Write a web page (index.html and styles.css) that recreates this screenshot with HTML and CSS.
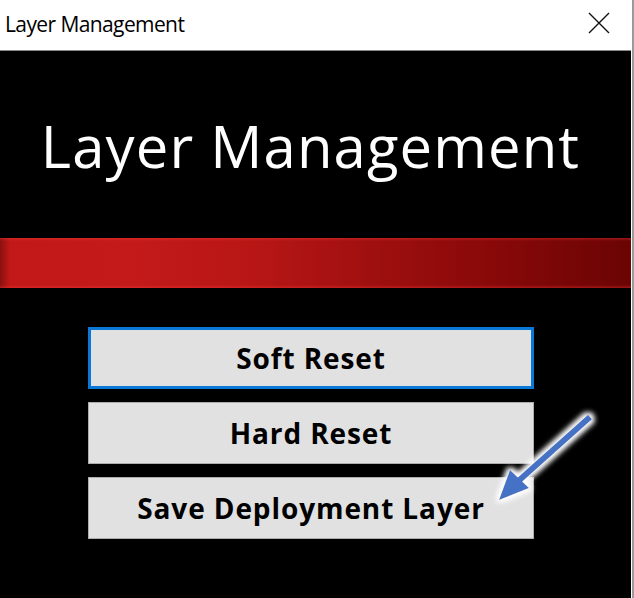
FILE: index.html
```html
<!DOCTYPE html>
<html>
<head>
<meta charset="utf-8">
<link rel="stylesheet" href="styles.css">
</head>
<body>
<div class="window">
  <div class="titlebar">
    <span class="title">Layer Management</span>
    <svg class="close" width="22" height="22" viewBox="0 0 22 22"><path d="M1 1 L21 21 M21 1 L1 21" stroke="#111" stroke-width="1.4" fill="none"/></svg>
  </div>
  <div class="content">
    <h1 class="heading">Layer Management</h1>
    <div class="band"></div>
    <div class="buttons">
      <button class="btn focused">Soft Reset</button>
      <button class="btn">Hard Reset</button>
      <button class="btn">Save Deployment Layer</button>
    </div>
    <svg class="arrow" width="120" height="110" viewBox="0 0 120 110">
      <defs>
        <filter id="glow" x="-30%" y="-30%" width="160%" height="160%">
          <feMorphology in="SourceAlpha" operator="dilate" radius="2.5" result="d"/>
          <feGaussianBlur in="d" stdDeviation="2.5" result="b"/>
          <feFlood flood-color="#ffffff"/>
          <feComposite in2="b" operator="in" result="g"/>
          <feMerge><feMergeNode in="g"/><feMergeNode in="SourceGraphic"/></feMerge>
        </filter>
      </defs>
      <g filter="url(#glow)">
        <line x1="106" y1="15" x2="31" y2="82" stroke="#4472c4" stroke-width="6"/>
        <polygon points="15,98 26,68 45,86" fill="#4472c4"/>
      </g>
    </svg>
  </div>
</div>
</body>
</html>
```
FILE: styles.css
```css
html, body {
  margin: 0;
  padding: 0;
  background: #ffffff;
}
.window {
  width: 631px;
  height: 598px;
  border-right: 1px solid #ffffff;
  display: flex;
  flex-direction: column;
  position: relative;
  box-shadow: 2px 0 0 #9a9a9a;
}
.titlebar {
  height: 50px;
  background: #ffffff;
  border-bottom: 1px solid #8a8a8a;
  display: flex;
  align-items: center;
  justify-content: space-between;
  padding: 0 21px 0 5px;
  flex-shrink: 0;
}
.title {
  font-family: "Open Sans", "Noto Sans", sans-serif;
  font-size: 21px;
  color: #000;
  letter-spacing: -0.6px;
  margin-top: -2px;
}
.close {
  display: block;
  margin-top: -4px;
}
.content {
  flex: 1;
  background: #000;
  position: relative;
  display: flex;
  flex-direction: column;
}
.heading {
  margin: 59px 0 0 0;
  padding-right: 10px;
  height: 128px;
  line-height: 72px;
  font-family: "Open Sans", "Noto Sans", sans-serif;
  font-weight: 400;
  font-size: 58px;
  color: #fff;
  text-align: center;
  letter-spacing: 1.1px;
}
.band {
  height: 50px;
  flex-shrink: 0;
  background:
    linear-gradient(to bottom, rgba(255,60,60,0.35) 0, rgba(255,60,60,0) 3px, rgba(0,0,0,0) 47px, rgba(255,60,60,0.35) 50px),
    linear-gradient(to right, #8a1010 0, #c21818 10px, #c41a1a 20%, #b81616 40%, #9e0f0f 60%, #860808 80%, #6b0404 100%);
}
.buttons {
  margin: 39px 0 0 88px;
  width: 446px;
  display: flex;
  flex-direction: column;
  gap: 13px;
}
.btn {
  height: 62px;
  background: #e1e1e1;
  border: 1px solid #adadad;
  font-family: "Open Sans", "Noto Sans", sans-serif;
  font-weight: 700;
  font-size: 28px;
  letter-spacing: 0.9px;
  color: #000;
  padding: 0;
}
.btn.focused {
  border: 3px solid #0a78d7;
}
.arrow {
  position: absolute;
  left: 484px;
  top: 351px;
}
```
